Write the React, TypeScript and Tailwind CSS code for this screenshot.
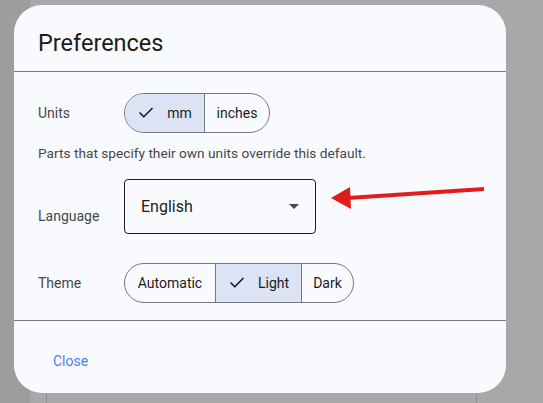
import { Check } from 'lucide-react';

type Option = { label: string; width: string };

function Segmented({ options, selected }: { options: Option[]; selected: string }) {
  return (
    <div className="flex h-[40px] rounded-full border border-[#74777f] overflow-hidden">
      {options.map((opt, i) => {
        const on = opt.label === selected;
        return (
          <div
            key={opt.label}
            className={`${opt.width} flex items-center justify-center gap-[12px] text-[14px] text-[#1a1c20] ${
              i > 0 ? 'border-l border-[#74777f]' : ''
            } ${on ? 'bg-[#dbe3f5]' : ''}`}
          >
            {on && <Check size={18} strokeWidth={2.2} className="text-[#1a1c20]" />}
            <span>{opt.label}</span>
          </div>
        );
      })}
    </div>
  );
}

export default function App() {
  return (
    <div
      className="relative w-[543px] h-[403px] overflow-hidden bg-[#a8a8aa]"
      style={{ fontFamily: 'Roboto, "Noto Sans", sans-serif' }}
    >
      {/* page behind the backdrop */}
      <div className="absolute left-0 top-0 bottom-0 w-[30px] bg-[#9d9da0]" />
      <div className="absolute left-[46px] right-[66px] top-[300px] bottom-0 border-x border-[#8e8f94]" />

      <div className="relative ml-[14px] mt-[5px] w-[492px] h-[388px] rounded-[28px] bg-[#f9fafd] flex flex-col">
        <div className="h-[67px] px-[24px] pt-[26px] border-b border-[#74777f]">
          <h2 className="text-[23.5px] leading-[24px] text-[#1a1c20]">Preferences</h2>
        </div>

        <div className="px-[24px] pt-[21px] pb-[17px] border-b border-[#74777f]">
          <div className="flex items-center">
            <span className="w-[86px] text-[14px] text-[#44474e]">Units</span>
            <Segmented
              selected="mm"
              options={[
                { label: 'mm', width: 'w-[79px]' },
                { label: 'inches', width: 'w-[65px]' },
              ]}
            />
          </div>
          <p className="mt-[10px] text-[13.7px] leading-[20px] text-[#44474e]">
            Parts that specify their own units override this default.
          </p>

          <div className="mt-[16px] flex items-center">
            <span className="w-[86px] pt-[19px] text-[14px] text-[#44474e]">Language</span>
            <div className="w-[192px] h-[55px] rounded-[4px] border border-[#1a1c20] flex items-center justify-between pl-[16px] pr-[16px]">
              <span className="text-[16px] text-[#1a1c20]">English</span>
              <svg width="10" height="5" viewBox="0 0 10 5">
                <path d="M0 0h10L5 5z" fill="#44474e" />
              </svg>
            </div>
          </div>

          <div className="mt-[29px] flex items-center">
            <span className="w-[86px] text-[14px] text-[#44474e]">Theme</span>
            <Segmented
              selected="Light"
              options={[
                { label: 'Automatic', width: 'w-[90px]' },
                { label: 'Light', width: 'w-[86px]' },
                { label: 'Dark', width: 'w-[52px]' },
              ]}
            />
          </div>
        </div>

        <div className="px-[24px] pt-[28px]">
          <button className="pl-[15px] text-[14px] leading-[20px] text-[#4c7ef2]">Close</button>
        </div>

        {/* callout arrow */}
        <svg className="absolute left-[298px] top-[175px]" width="180" height="30" viewBox="0 0 180 30">
          <path d="M172 9 L36 18" stroke="#e21c1c" strokeWidth="4" strokeLinecap="butt" />
          <path d="M19 18 L38 7 L39 29 Z" fill="#e21c1c" />
        </svg>
      </div>
    </div>
  );
}
